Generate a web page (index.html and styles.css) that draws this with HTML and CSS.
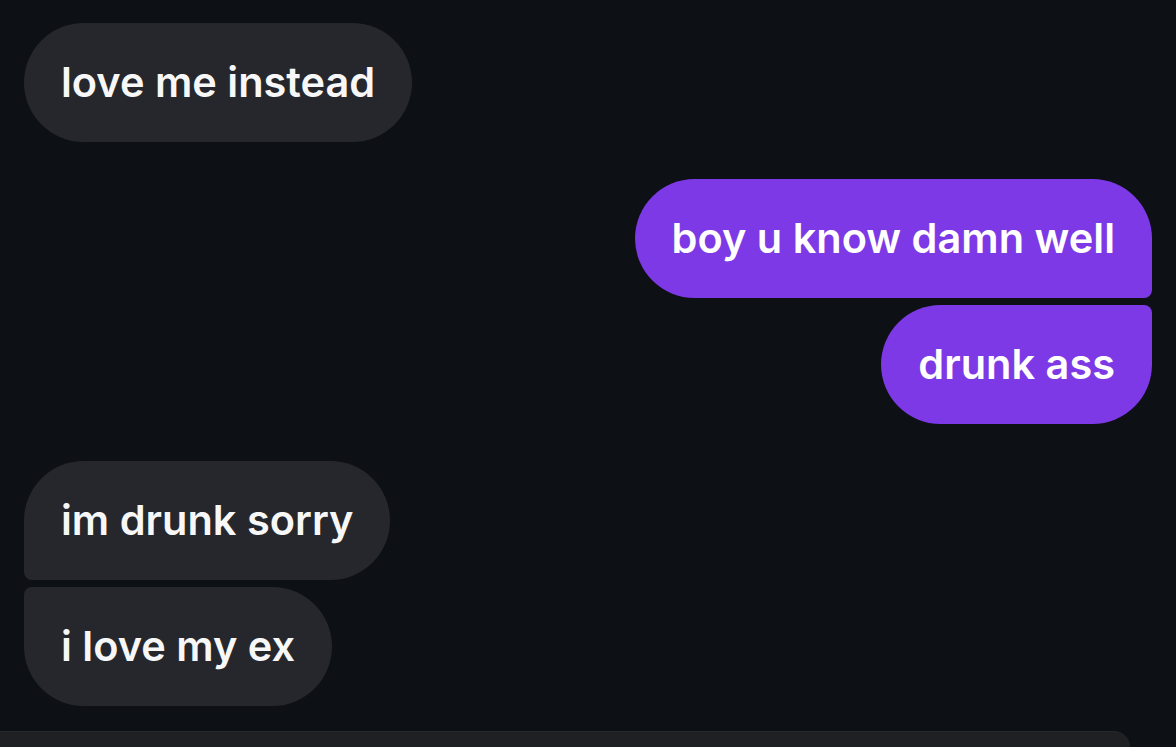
FILE: index.html
```html
<!DOCTYPE html>
<html>
<head>
<meta charset="utf-8">
<link rel="stylesheet" href="styles.css">
</head>
<body>
<div class="chat">
  <div class="group in">
    <div class="bubble single">love me instead</div>
  </div>
  <div class="group out">
    <div class="bubble first">boy u know damn well</div>
    <div class="bubble last">drunk ass</div>
  </div>
  <div class="group in">
    <div class="bubble first">im drunk sorry</div>
    <div class="bubble last">i love my ex</div>
  </div>
</div>
<div class="composer"></div>
</body>
</html>
```
FILE: styles.css
```css
html, body {
  margin: 0;
  padding: 0;
  background: #0d1015;
  height: 100%;
  overflow: hidden;
}
body {
  font-family: Inter, "Noto Sans", sans-serif;
}
.chat {
  display: flex;
  flex-direction: column;
  gap: 37px;
  padding: 23px 24px 0 24px;
}
.group {
  display: flex;
  flex-direction: column;
  gap: 7px;
}
.group.in { align-items: flex-start; }
.group.out { align-items: flex-end; }
.bubble {
  height: 119px;
  box-sizing: border-box;
  padding: 0 37px 2px 37px;
  display: flex;
  align-items: center;
  font-size: 41.5px;
  font-weight: 600;
  border-radius: 60px;
  color: #f7f7f8;
}
.in .bubble { background: #25272c; }
.out .bubble { background: #7d39e5; color: #fff; }
.in .first { border-bottom-left-radius: 8px; }
.in .last { border-top-left-radius: 8px; }
.out .first { border-bottom-right-radius: 8px; }
.out .last { border-top-right-radius: 8px; }
.composer {
  margin-top: 25px;
  margin-left: -20px;
  width: 1150px;
  height: 15px;
  background: #1f2023;
  border-radius: 0 50px 0 0;
  border-top: 1px solid #26272b;
}
```
